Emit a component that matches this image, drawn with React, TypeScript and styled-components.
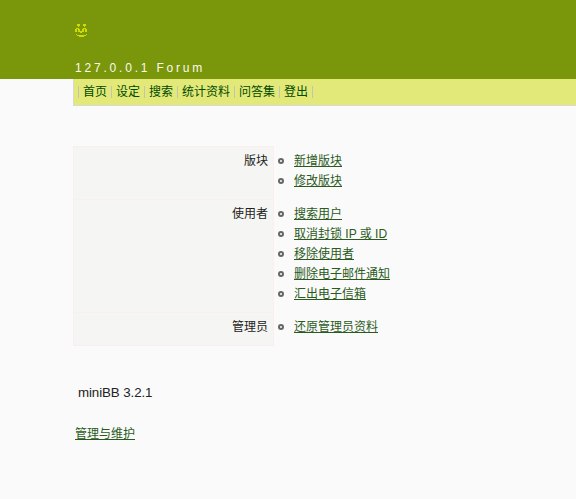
import React from 'react';
import styled, { createGlobalStyle } from 'styled-components';

const GlobalStyle = createGlobalStyle`
  html, body {
    margin: 0;
    padding: 0;
    background: #fafafa;
  }
  body {
    font-family: "Liberation Sans", Arial, "Noto Sans CJK SC", sans-serif;
    font-size: 12px;
    color: #222;
  }
`;

const Page = styled.div`
  width: 576px;
  height: 499px;
  overflow: hidden;
`;

const Header = styled.header`
  height: 79px;
  box-sizing: border-box;
  background: #7a960a;
  padding: 24px 0 0 75px;
`;

const Logo = styled.svg`
  display: block;
  width: 13px;
  height: 13px;
`;

const ForumName = styled.div`
  margin-top: 24px;
  color: #fafaf0;
  font-size: 12px;
  line-height: 14px;
  letter-spacing: 2.8px;
`;

const NavBar = styled.nav`
  height: 27px;
  box-sizing: border-box;
  margin-left: 73px;
  padding-left: 4px;
  background: #e3e978;
  border-left: 1px solid #d8d8d8;
  border-bottom: 1px solid #d8d8d8;
  display: flex;
  align-items: center;
`;

const NavItem = styled.a`
  color: #004a00;
  font-size: 12px;
  line-height: 12px;
  padding: 0 4px;
  border-left: 1px solid #c4c4b0;
  &:last-child {
    padding: 0;
    height: 12px;
  }
`;

const Admin = styled.div`
  margin: 40px 0 0 73px;
  width: 400px;
`;

const Row = styled.div`
  display: flex;
`;

const RowLabel = styled.div<{ $height: number }>`
  width: 201px;
  height: ${(p) => p.$height}px;
  flex: none;
  box-sizing: border-box;
  padding: 7px 5px 0 0;
  background: #f5f5f3;
  border: 1px solid #fbeeee;
  border-bottom: none;
  text-align: right;
  line-height: 14px;
  color: #222;
`;

const LastLabel = styled(RowLabel)`
  border-bottom: 1px solid #fbeeee;
`;

const LinkList = styled.ul`
  margin: 0;
  padding: 5px 0 0 20px;
  list-style: none;
`;

const LinkItem = styled.li`
  position: relative;
  line-height: 20px;
  height: 20px;
  &::before {
    content: '';
    position: absolute;
    left: -16px;
    top: 7px;
    width: 2px;
    height: 2px;
    border: 2px solid #666;
    border-radius: 50%;
  }
`;

const AdminLink = styled.a`
  color: #2a5a1c;
  text-decoration: underline;
`;

const Version = styled.div`
  margin: 39px 0 0 78px;
  font-size: 13.33px;
  line-height: 16px;
  color: #222;
  letter-spacing: -0.1px;
`;

const Footer = styled.div`
  margin: 26px 0 0 75px;
  line-height: 14px;
`;

const logoPixels = [
  [2, 0, 3, 2], [8, 0, 3, 2],
  [3, 2, 1, 1], [9, 2, 1, 1],
  [1, 4, 3, 1], [8, 4, 3, 1],
  [0, 5, 2, 3], [3, 5, 2, 3], [7, 5, 2, 3], [10, 5, 2, 3],
  [5, 7, 2, 2],
  [1, 10, 1, 1], [11, 10, 1, 1],
  [2, 11, 9, 1],
  [4, 12, 5, 1],
];

const sections = [
  { label: '版块', height: 53, links: ['新增版块', '修改版块'] },
  { label: '使用者', height: 113, links: ['搜索用户', '取消封锁 IP 或 ID', '移除使用者', '删除电子邮件通知', '汇出电子信箱'] },
  { label: '管理员', height: 34, links: ['还原管理员资料'] },
];

const navItems = ['首页', '设定', '搜索', '统计资料', '问答集', '登出'];

const App = () => {
  return (
    <Page>
      <GlobalStyle />
      <Header>
        <Logo viewBox="0 0 13 13" shapeRendering="crispEdges">
          {logoPixels.map(([x, y, w, h], i) => (
            <rect key={i} x={x} y={y} width={w} height={h} fill="#cfdc00" />
          ))}
        </Logo>
        <ForumName>127.0.0.1 Forum</ForumName>
      </Header>
      <NavBar>
        {navItems.map((item) => (
          <NavItem key={item}>{item}</NavItem>
        ))}
        <NavItem />
      </NavBar>
      <Admin>
        {sections.map((section, i) => {
          const Label = i === sections.length - 1 ? LastLabel : RowLabel;
          return (
            <Row key={section.label}>
              <Label $height={section.height}>{section.label}</Label>
              <LinkList>
                {section.links.map((link) => (
                  <LinkItem key={link}>
                    <AdminLink href="#">{link}</AdminLink>
                  </LinkItem>
                ))}
              </LinkList>
            </Row>
          );
        })}
      </Admin>
      <Version>miniBB 3.2.1</Version>
      <Footer>
        <AdminLink href="#">管理与维护</AdminLink>
      </Footer>
    </Page>
  );
};

export default App;
